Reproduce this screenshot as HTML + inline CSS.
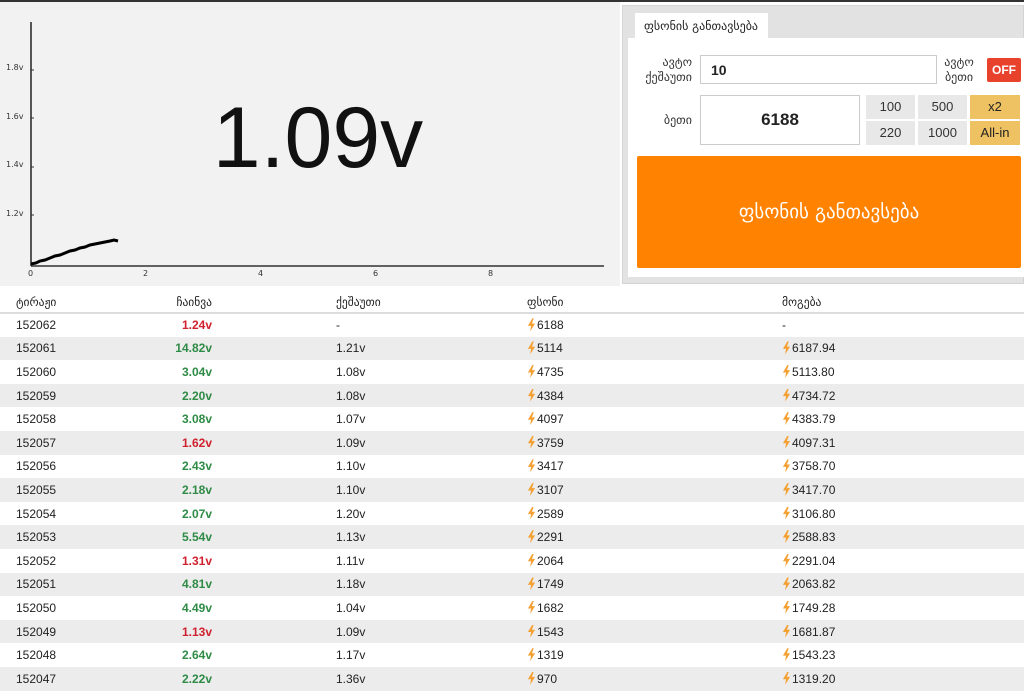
<!DOCTYPE html>
<html><head><meta charset="utf-8"><style>
*{margin:0;padding:0;box-sizing:border-box}
body{width:1024px;height:693px;overflow:hidden;background:#fff;font-family:"Liberation Sans","DejaVu Sans",sans-serif;color:#222;position:relative}
.abs{position:absolute}
.topline{left:0;top:0;width:1024px;height:2px;background:#333}
.chart{left:0;top:2px;width:620px;height:284px;background:#f2f2f2}
.panel{left:622px;top:5px;width:402px;height:279px;background:#e2e2e2;border:1px solid #d4d4d4}
.tab{left:635px;top:13px;width:133px;height:26px;background:#fff;font-size:12px;padding:6px 0 0 9px;font-family:"DejaVu Sans",sans-serif}
.inner{left:628px;top:38px;width:396px;height:239px;background:#fff}
.lbl{font-size:12px;color:#333;text-align:right;font-family:"DejaVu Sans",sans-serif;line-height:15px}
.box{border:1px solid #ccc;background:#fff}
.btn{background:#e8e8e8;font-size:13px;text-align:center;line-height:24px;color:#333}
.gold{background:#eec162;color:#222}
table{position:absolute;left:0;top:291px;width:1024px;border-collapse:collapse;font-size:12px}
td,th{height:23.6px;padding:0}
th{font-weight:normal;text-align:left;font-family:"DejaVu Sans",sans-serif;font-size:11.5px;border-bottom:2px solid #ddd;height:22px}
tr:nth-child(odd) td{background:#ececec}
.c1{padding-left:16px;width:130px}
.c2{text-align:right;width:82px}
.c3{padding-left:124px;width:315px}
.c4{width:255px;padding-left:0}
.r{color:#d0212e;font-weight:bold}
.g{color:#2e8b45;font-weight:bold}
.b{display:inline-block;width:9px;height:13px;vertical-align:-2px;margin-right:1px;background:#f5a033;clip-path:polygon(60% 0,10% 58%,45% 58%,35% 100%,90% 40%,55% 40%,75% 0)}
</style></head><body>
<div class="abs topline"></div>
<div class="abs chart"></div>
<svg class="abs" style="left:0;top:0" width="620" height="290">
<line x1="31" y1="22" x2="31" y2="266" stroke="#222" stroke-width="1.5"/>
<line x1="31" y1="266" x2="604" y2="266" stroke="#333" stroke-width="1.5"/>
<g font-size="8" fill="#333" font-family="DejaVu Sans">
<text x="6" y="70">1.8v</text><text x="6" y="119">1.6v</text><text x="6" y="167">1.4v</text><text x="6" y="216">1.2v</text>
<text x="28" y="276">0</text><text x="143" y="276">2</text><text x="258" y="276">4</text><text x="373" y="276">6</text><text x="488" y="276">8</text>
</g>
<g stroke="#333"><line x1="31" y1="70" x2="34" y2="70"/><line x1="31" y1="118" x2="34" y2="118"/><line x1="31" y1="167" x2="34" y2="167"/><line x1="31" y1="215" x2="34" y2="215"/></g>
<polyline points="31,264 36,263 40,261 45,260 50,258 55,256 60,255 65,253 70,251 75,250 80,248 85,247 90,245 95,244 100,243 105,242 110,241 114,240 118,241" fill="none" stroke="#000" stroke-width="3"/>
<text x="318" y="167" font-size="86" text-anchor="middle" font-family="Liberation Sans" fill="#111">1.09v</text>
</svg>
<div class="abs panel"></div>
<div class="abs inner"></div>
<div class="abs tab">ფსონის განთავსება</div>
<div class="abs lbl" style="left:630px;top:55px;width:62px">ავტო<br>ქეშაუთი</div>
<div class="abs box" style="left:700px;top:55px;width:237px;height:29px;font-size:14px;font-weight:bold;padding:6px 10px">10</div>
<div class="abs lbl" style="left:940px;top:55px;width:38px;text-align:center">ავტო<br>ბეთი</div>
<div class="abs" style="left:987px;top:58px;width:34px;height:24px;background:#e8412c;color:#fff;font-weight:bold;font-size:12px;text-align:center;line-height:24px;border-radius:2px">OFF</div>
<div class="abs lbl" style="left:630px;top:113px;width:62px">ბეთი</div>
<div class="abs box" style="left:700px;top:95px;width:160px;height:50px;font-size:17px;font-weight:bold;text-align:center;line-height:48px">6188</div>
<div class="abs btn" style="left:866px;top:95px;width:49px;height:24px">100</div>
<div class="abs btn" style="left:918px;top:95px;width:49px;height:24px">500</div>
<div class="abs btn gold" style="left:970px;top:95px;width:50px;height:24px">x2</div>
<div class="abs btn" style="left:866px;top:121px;width:49px;height:24px">220</div>
<div class="abs btn" style="left:918px;top:121px;width:49px;height:24px">1000</div>
<div class="abs btn gold" style="left:970px;top:121px;width:50px;height:24px">All-in</div>
<div class="abs" style="left:637px;top:156px;width:384px;height:112px;background:#ff8200;border-radius:2px;color:#fff;font-size:19px;text-align:center;line-height:112px;font-family:'DejaVu Sans',sans-serif">ფსონის განთავსება</div>
<table>
<tr><th class="c1">ტირაჟი</th><th class="c2" style="text-align:right">ჩაინვა</th><th class="c3">ქეშაუთი</th><th class="c4">ფსონი</th><th>მოგება</th></tr>
<tr><td class="c1">152062</td><td class="c2 r">1.24v</td><td class="c3">-</td><td class="c4"><i class="b"></i>6188</td><td>-</td></tr>
<tr><td class="c1">152061</td><td class="c2 g">14.82v</td><td class="c3">1.21v</td><td class="c4"><i class="b"></i>5114</td><td><i class="b"></i>6187.94</td></tr>
<tr><td class="c1">152060</td><td class="c2 g">3.04v</td><td class="c3">1.08v</td><td class="c4"><i class="b"></i>4735</td><td><i class="b"></i>5113.80</td></tr>
<tr><td class="c1">152059</td><td class="c2 g">2.20v</td><td class="c3">1.08v</td><td class="c4"><i class="b"></i>4384</td><td><i class="b"></i>4734.72</td></tr>
<tr><td class="c1">152058</td><td class="c2 g">3.08v</td><td class="c3">1.07v</td><td class="c4"><i class="b"></i>4097</td><td><i class="b"></i>4383.79</td></tr>
<tr><td class="c1">152057</td><td class="c2 r">1.62v</td><td class="c3">1.09v</td><td class="c4"><i class="b"></i>3759</td><td><i class="b"></i>4097.31</td></tr>
<tr><td class="c1">152056</td><td class="c2 g">2.43v</td><td class="c3">1.10v</td><td class="c4"><i class="b"></i>3417</td><td><i class="b"></i>3758.70</td></tr>
<tr><td class="c1">152055</td><td class="c2 g">2.18v</td><td class="c3">1.10v</td><td class="c4"><i class="b"></i>3107</td><td><i class="b"></i>3417.70</td></tr>
<tr><td class="c1">152054</td><td class="c2 g">2.07v</td><td class="c3">1.20v</td><td class="c4"><i class="b"></i>2589</td><td><i class="b"></i>3106.80</td></tr>
<tr><td class="c1">152053</td><td class="c2 g">5.54v</td><td class="c3">1.13v</td><td class="c4"><i class="b"></i>2291</td><td><i class="b"></i>2588.83</td></tr>
<tr><td class="c1">152052</td><td class="c2 r">1.31v</td><td class="c3">1.11v</td><td class="c4"><i class="b"></i>2064</td><td><i class="b"></i>2291.04</td></tr>
<tr><td class="c1">152051</td><td class="c2 g">4.81v</td><td class="c3">1.18v</td><td class="c4"><i class="b"></i>1749</td><td><i class="b"></i>2063.82</td></tr>
<tr><td class="c1">152050</td><td class="c2 g">4.49v</td><td class="c3">1.04v</td><td class="c4"><i class="b"></i>1682</td><td><i class="b"></i>1749.28</td></tr>
<tr><td class="c1">152049</td><td class="c2 r">1.13v</td><td class="c3">1.09v</td><td class="c4"><i class="b"></i>1543</td><td><i class="b"></i>1681.87</td></tr>
<tr><td class="c1">152048</td><td class="c2 g">2.64v</td><td class="c3">1.17v</td><td class="c4"><i class="b"></i>1319</td><td><i class="b"></i>1543.23</td></tr>
<tr><td class="c1">152047</td><td class="c2 g">2.22v</td><td class="c3">1.36v</td><td class="c4"><i class="b"></i>970</td><td><i class="b"></i>1319.20</td></tr>
</table>
</body></html>
